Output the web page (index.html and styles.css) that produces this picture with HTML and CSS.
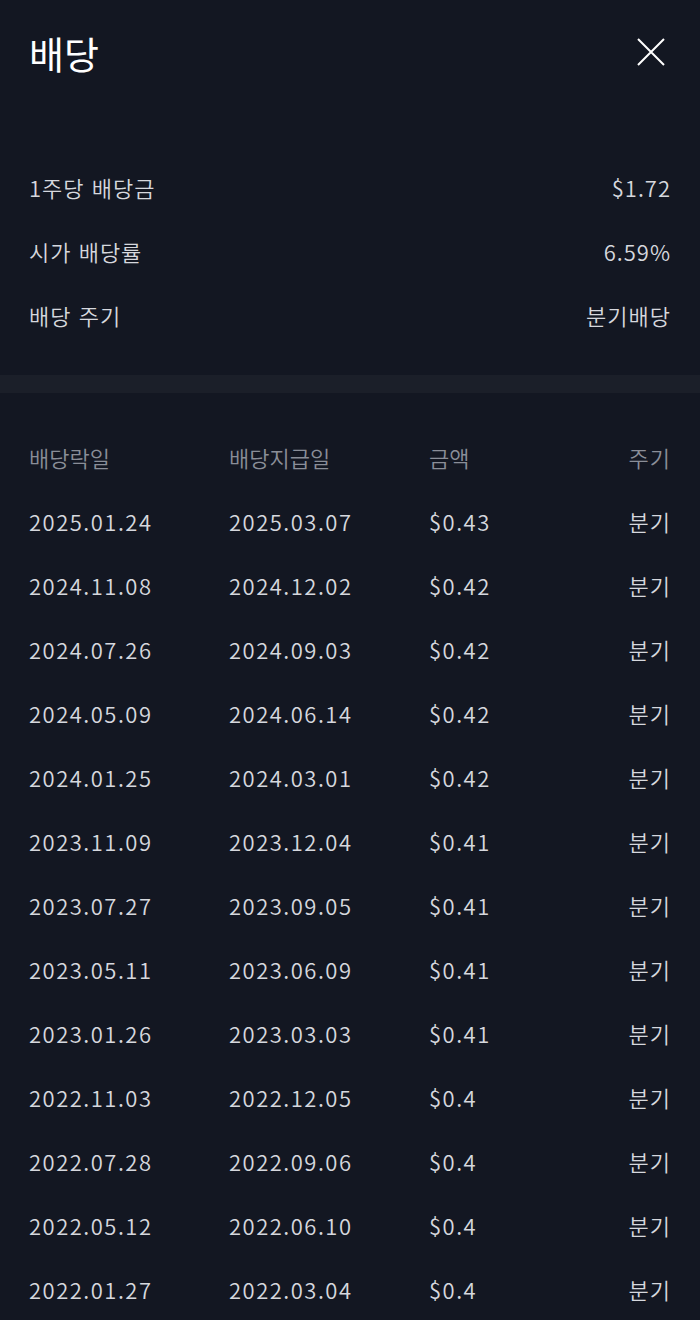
FILE: index.html
```html
<!DOCTYPE html>
<html lang="ko">
<head>
<meta charset="utf-8">
<link rel="stylesheet" href="styles.css">
</head>
<body>
<div class="page">
  <header class="top">
    <h1 class="title">배당</h1>
    <svg class="close" width="28" height="28" viewBox="0 0 28 28"><path d="M1 1 L27 27 M27 1 L1 27" stroke="#ffffff" stroke-width="2" fill="none"/></svg>
  </header>
  <section class="summary">
    <div class="srow"><span>1주당 배당금</span><span class="r">$1.72</span></div>
    <div class="srow"><span>시가 배당률</span><span class="r">6.59%</span></div>
    <div class="srow"><span>배당 주기</span><span class="r">분기배당</span></div>
  </section>
  <div class="band"></div>
  <section class="table">
    <div class="trow head"><span>배당락일</span><span>배당지급일</span><span>금액</span><span class="r">주기</span></div>
    <div class="trow"><span>2025.01.24</span><span>2025.03.07</span><span>$0.43</span><span class="r">분기</span></div>
    <div class="trow"><span>2024.11.08</span><span>2024.12.02</span><span>$0.42</span><span class="r">분기</span></div>
    <div class="trow"><span>2024.07.26</span><span>2024.09.03</span><span>$0.42</span><span class="r">분기</span></div>
    <div class="trow"><span>2024.05.09</span><span>2024.06.14</span><span>$0.42</span><span class="r">분기</span></div>
    <div class="trow"><span>2024.01.25</span><span>2024.03.01</span><span>$0.42</span><span class="r">분기</span></div>
    <div class="trow"><span>2023.11.09</span><span>2023.12.04</span><span>$0.41</span><span class="r">분기</span></div>
    <div class="trow"><span>2023.07.27</span><span>2023.09.05</span><span>$0.41</span><span class="r">분기</span></div>
    <div class="trow"><span>2023.05.11</span><span>2023.06.09</span><span>$0.41</span><span class="r">분기</span></div>
    <div class="trow"><span>2023.01.26</span><span>2023.03.03</span><span>$0.41</span><span class="r">분기</span></div>
    <div class="trow"><span>2022.11.03</span><span>2022.12.05</span><span>$0.4</span><span class="r">분기</span></div>
    <div class="trow"><span>2022.07.28</span><span>2022.09.06</span><span>$0.4</span><span class="r">분기</span></div>
    <div class="trow"><span>2022.05.12</span><span>2022.06.10</span><span>$0.4</span><span class="r">분기</span></div>
    <div class="trow"><span>2022.01.27</span><span>2022.03.04</span><span>$0.4</span><span class="r">분기</span></div>
  </section>
</div>
</body>
</html>
```

FILE: styles.css
```css
* { box-sizing: border-box; }
html, body { margin: 0; padding: 0; background: #131722; }
body {
  font-family: "Noto Sans CJK KR", "Noto Sans", sans-serif;
  font-weight: 350;
  color: #d6d8de;
  overflow: hidden;
}
.page { width: 700px; }
.top {
  height: 104px;
  padding: 0 35px 0 29px;
  display: flex;
  align-items: center;
  justify-content: space-between;
}
.title {
  margin: 0;
  font-size: 38px;
  font-weight: 400;
  color: #ffffff;
}
.close { display: block; }
.summary { padding: 51px 30px 28px 29px; }
.srow {
  height: 64px;
  display: flex;
  align-items: center;
  justify-content: space-between;
  font-size: 22px;
  letter-spacing: 1px;
  color: #d6d8de;
}
.band { height: 18px; background: #1b1f29; }
.table { padding: 32px 30px 0 29px; }
.trow {
  height: 64px;
  display: grid;
  grid-template-columns: 200px 200px 1fr auto;
  align-items: center;
  font-size: 22px;
  letter-spacing: 1.5px;
  color: #d6d8de;
}
.trow.head { color: #8a8e98; letter-spacing: 0; }
.trow .r { letter-spacing: 1px; }
.r { text-align: right; margin-right: -1px; }
```
